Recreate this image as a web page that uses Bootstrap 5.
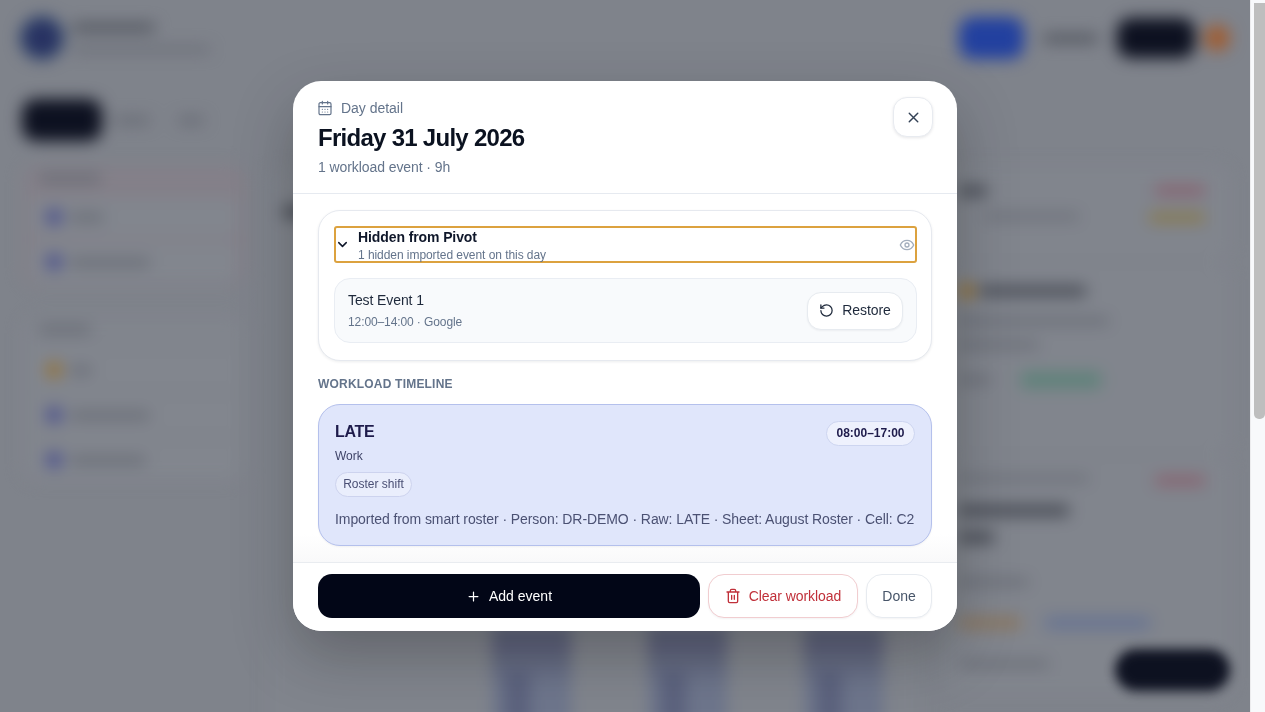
<!doctype html>
<html lang="en">
<head>
<meta charset="utf-8">
<title>Day detail</title>
<link href="https://cdn.jsdelivr.net/npm/bootstrap@5.3.0/dist/css/bootstrap.min.css" rel="stylesheet">
<style>
html,body{height:100%;margin:0;overflow:hidden}
body{font-family:"Liberation Sans",Arial,sans-serif;background:#f8f9fb;color:#0f172a}
.scroller{height:712px;width:1250px;overflow:hidden;background:#cacdd4}
.track-strip{position:fixed;left:1250px;top:0;width:15px;height:712px;background:#f8f9fb;border-left:1px solid #ececee;z-index:7}
.track-thumb{position:absolute;left:3px;right:0;top:3px;height:416px;background:#bebebe;border-radius:0 0 5px 5px}
.blur-page{height:1207px;filter:blur(8px);padding:17px 20px 0 20px}
.logo-dot{width:44px;height:44px;border-radius:50%;background:radial-gradient(circle,#39458f 40%,#3f7fb0);flex:none;margin-right:-11px}
.bar{display:block;border-radius:3px;height:7px;background:#6a6d76}
.bar-lite{background:#9a9da6}
.blue-pill{width:65px;height:42px;border-radius:14px;background:#2f5ef5}
.navy-pill{width:78px;height:40px;border-radius:14px;background:#0c0f22;margin-right:-10px}
.orange-dot{width:26px;height:26px;border-radius:50%;background:#ff8d40}
.tab-pill{width:80px;height:42px;border-radius:14px;background:#0c0f22}
.top-row{height:42px;gap:19px}
.tab-row{margin-top:40px;gap:12px;padding-left:2px}
.work-grid{display:grid;grid-template-columns:225px 655px 1fr;column-gap:20px;margin-top:24px;padding-left:2px}
.side-card{border:1px solid #c6c6ce;border-radius:14px;padding:8px;margin-bottom:31px}
.side-card.rose{background:#d2c8d0;height:120px}
.side-card.plain{background:#cdd0d7;height:165px}
.side-label-a{margin:1px 8px 15px}
.side-label-b{margin:1px 8px 17px}
.side-row{height:40px;border:1px solid #c6c9d0;border-radius:10px;margin-top:5px;padding-left:14px;gap:8px;background:#cfd2d9}
.tone{width:16px;height:16px;border-radius:50%;background:#6a70d8;flex:none}
.tone.amber{background:#eeb040}
.main-panel{background:#cdd0d7;border:1px solid #c4c7ce;border-radius:18px;height:1000px;padding:40px 15px}
.week-strip{margin-top:408px;padding-left:209px;gap:77px}
.week-col{width:79px;height:300px;background:linear-gradient(#9499bc 0,#9499bc 20px,#adb7d5 60px);display:flex;justify-content:flex-start;padding:45px 0 0 13px}
.week-col span{width:25px;height:60px;background:#8f96bd;display:block}
.info-card{background:#cdd0d7;border:1px solid #c4c7ce;border-radius:14px;padding:20px 16px;margin-bottom:0}
.info-one{height:97px}
.info-two{height:193px}
.info-three{height:240px}
.tag-rose{width:50px;height:9px;background:#dc8f9f}
.tag-amber{width:56px;height:9px;background:#dcbc60}
.tag-green{width:80px;height:16px;background:#92cdb6}
.tag-soft{width:62px;height:12px;background:#dcb88c}
.tag-blue{width:105px;height:12px;background:#a0b2e0}
.float-pill{width:115px;height:42px;border-radius:21px;background:#0c0f22;position:fixed;left:1115px;top:649px;filter:blur(6px)}

.scrim{position:fixed;left:0;top:0;width:1250px;height:712px;background:rgba(15,20,30,.4);z-index:5}
.day-dialog{position:fixed;left:293px;top:81px;width:664px;height:550px;background:#fff;border-radius:28px;z-index:6;display:flex;flex-direction:column;overflow:hidden;box-shadow:0 24px 60px rgba(0,0,0,.25)}
.day-head{padding:17px 24px 0 25px;height:113px;border-bottom:1px solid #e6eaf0;flex:none;position:relative}
.eyebrow{font-size:14px;line-height:20px;color:#64748b;gap:8px;letter-spacing:-.02px}
.eyebrow svg{margin-left:-1px}
.day-title{font-size:24px;line-height:30px;font-weight:700;letter-spacing:-.72px;color:#0b1220;margin:5px 0 0}
.day-sub{font-size:14px;line-height:20px;color:#64748b;margin:4px 0 0;letter-spacing:-.08px}
.close-btn{position:absolute;right:24px;top:16px;width:40px;height:40px;border:1px solid #e8ebf0;border-radius:14px;background:#fff;color:#334155;padding:0;box-shadow:0 1px 3px rgba(15,23,42,.1)}
.day-body{flex:1 1 auto;padding:16px 25px 0 25px;background:linear-gradient(#fff 340px,#f9f9fa 368px);overflow:hidden}
.hidden-card{height:151px;border:1px solid #e6e9ef;border-radius:22px;padding:15px;box-shadow:0 1px 3px rgba(15,23,42,.08);background:#fff}
.hidden-toggle{height:37px;width:583px;border:2px solid #dca23f;border-radius:3px;background:#fff;padding:0;text-align:left}
.chev{width:23px;flex:none;line-height:1;display:flex;justify-content:flex-start;margin-left:-1px;margin-top:-1px}
.toggle-title{display:block;font-size:14px;line-height:18px;font-weight:700;color:#0f172a;margin-top:1px;letter-spacing:-.1px}
.toggle-sub{display:block;font-size:12px;line-height:16px;color:#64748b;letter-spacing:-.06px;margin-top:1px}
.hidden-row{height:65px;width:583px;margin-top:15px;border:1px solid #e9edf3;border-radius:16px;background:#f8fafc;padding:0 13px}
.hidden-name{font-size:14px;line-height:20px;color:#1e293b;letter-spacing:-.1px}
.hidden-meta{font-size:12px;line-height:16px;color:#64748b;margin-top:4px;letter-spacing:-.1px}
.hidden-text{padding-bottom:2px}
.restore-btn{height:38px;width:96px;border:1px solid #e7ebf0;border-radius:14px;background:#fff;font-size:14px;color:#1e293b;gap:8px;padding:0;box-shadow:0 1px 2px rgba(15,23,42,.05);letter-spacing:-.08px}
.sect-label{font-size:12px;line-height:16px;font-weight:700;letter-spacing:.2px;color:#64748b;margin:15px 0 12px}
.shift-card{height:142px;border:1px solid #b4c0ec;border-radius:22px;background:#e0e6fb;padding:15px 16px;box-shadow:0 1px 2px rgba(15,23,42,.05)}
.shift-name{font-size:16px;line-height:24px;font-weight:700;color:#1e1b4b;letter-spacing:-.3px}
.shift-kind{font-size:12px;line-height:16px;color:#3f4468;margin-top:2px}
.time-chip{height:25px;width:89px;border:1px solid #cdd5f0;border-radius:13px;background:#eef1fd;font-size:12px;font-weight:700;color:#1e1b4b;line-height:23px;text-align:center;margin-top:1px}
.kind-chip{display:block;width:77px;text-align:center;height:25px;line-height:23px;border:1px solid #cdd3ee;border-radius:13px;background:#eaeefc;font-size:12px;color:#4a4f74;padding:0;margin-top:8px}
.shift-note{font-size:14px;line-height:20px;color:#4b5173;margin-top:12px;white-space:nowrap;letter-spacing:-.08px}
.day-foot{height:69px;flex:none;border-top:1px solid #e9ecf0;padding:11px 25px 0 25px;gap:8px;background:#fff}
.add-btn{flex:1 1 auto;height:44px;border:0;border-radius:14px;background:#020617;color:#fff;font-size:14px;gap:8px}
.add-btn:hover{background:#020617;color:#fff}
.clear-btn{width:150px;height:44px;flex:none;border:1px solid #f1cdd0;border-radius:16px;background:#fff;color:#c0303a;font-size:14px;gap:8px;padding:0;box-shadow:0 1px 2px rgba(15,23,42,.05);letter-spacing:-.06px}
.done-btn{width:66px;height:44px;flex:none;border:1px solid #e7ebf0;border-radius:16px;background:#fff;color:#475569;font-size:14px;padding:0;box-shadow:0 1px 2px rgba(15,23,42,.05)}
</style>
</head>
<body>
<div class="scroller">
  <div class="blur-page" aria-hidden="true">
    <div class="d-flex align-items-center top-row">
      <div class="logo-dot"></div>
      <div class="flex-grow-1">
        <span class="bar" style="width:83px;margin-bottom:16px"></span>
        <span class="bar bar-lite" style="width:138px;height:5px"></span>
      </div>
      <div class="blue-pill"></div>
      <span class="bar" style="width:55px"></span>
      <div class="navy-pill"></div>
      <div class="orange-dot"></div>
    </div>
    <div class="d-flex align-items-center tab-row">
      <div class="tab-pill"></div>
      <span class="bar bar-lite" style="width:36px"></span>
      <span class="bar bar-lite ms-3" style="width:26px"></span>
    </div>
    <div class="work-grid">
      <div>
        <div class="side-card rose">
          <span class="bar bar-lite side-label-a" style="width:62px"></span>
          <div class="side-row d-flex align-items-center"><i class="tone"></i><span class="bar bar-lite" style="width:34px"></span></div>
          <div class="side-row d-flex align-items-center"><i class="tone"></i><span class="bar bar-lite" style="width:80px"></span></div>
        </div>
        <div class="side-card plain">
          <span class="bar bar-lite side-label-b" style="width:52px"></span>
          <div class="side-row d-flex align-items-center"><i class="tone amber"></i><span class="bar bar-lite" style="width:22px"></span></div>
          <div class="side-row d-flex align-items-center"><i class="tone"></i><span class="bar bar-lite" style="width:80px"></span></div>
          <div class="side-row d-flex align-items-center"><i class="tone"></i><span class="bar bar-lite" style="width:76px"></span></div>
        </div>
      </div>
      <div class="main-panel">
        <span class="bar" style="width:90px;height:12px"></span>
        <div class="week-strip d-flex">
          <div class="week-col"><span></span></div>
          <div class="week-col"><span></span></div>
          <div class="week-col"><span></span></div>
        </div>
      </div>
      <div>
        <div class="info-card info-one d-flex justify-content-between">
          <div class="flex-grow-1"><span class="bar" style="width:28px;height:10px;margin-bottom:18px"></span><span class="bar bar-lite" style="width:95px;height:5px;margin-left:25px"></span></div>
          <div class="d-flex flex-column align-items-end me-2" style="gap:18px"><span class="bar tag-rose"></span><span class="bar tag-amber"></span></div>
        </div>
        <div class="info-card info-two">
          <div class="d-flex align-items-center" style="gap:4px;margin-bottom:19px"><i class="tone amber"></i><span class="bar" style="width:107px;height:10px"></span></div>
          <span class="bar bar-lite" style="width:150px;height:6px;margin-bottom:18px"></span>
          <span class="bar bar-lite" style="width:80px;height:6px;margin-bottom:24px"></span>
          <div class="d-flex align-items-center" style="gap:30px"><span class="bar bar-lite" style="width:32px;height:6px"></span><span class="bar tag-green"></span></div>
        </div>
        <div class="info-card info-three">
          <div class="d-flex justify-content-between"><span class="bar bar-lite" style="width:130px;height:5px"></span><span class="bar tag-rose me-2"></span></div>
          <span class="bar" style="width:110px;height:11px;margin-top:20px"></span>
          <span class="bar" style="width:35px;height:11px;margin-top:16px"></span>
          <span class="bar bar-lite" style="width:70px;height:6px;margin-top:36px"></span>
          <div class="d-flex gap-4" style="margin-top:32px"><span class="bar tag-soft"></span><span class="bar tag-blue"></span></div>
          <span class="bar bar-lite" style="width:90px;height:6px;margin-top:32px"></span>
        </div>
      </div>
    </div>
  </div>
</div>
<div class="float-pill" aria-hidden="true"></div>
<div class="scrim"></div>
<div class="track-strip" aria-hidden="true"><div class="track-thumb"></div></div>

<div class="day-dialog" role="dialog" aria-label="Day detail">
  <div class="day-head">
    <div class="eyebrow d-flex align-items-center">
      <svg width="16" height="16" viewBox="0 0 24 24" fill="none" stroke="currentColor" stroke-width="1.8" stroke-linecap="round" stroke-linejoin="round"><path d="M8 2v4M16 2v4"/><rect x="3" y="4" width="18" height="18" rx="2"/><path d="M3 10h18M8 14h.01M12 14h.01M16 14h.01M8 18h.01M12 18h.01M16 18h.01"/></svg>
      <span>Day detail</span>
    </div>
    <h1 class="day-title">Friday 31 July 2026</h1>
    <p class="day-sub">1 workload event · 9h</p>
    <button class="close-btn d-flex align-items-center justify-content-center" type="button" aria-label="Close">
      <svg width="17" height="17" viewBox="0 0 24 24" fill="none" stroke="currentColor" stroke-width="2" stroke-linecap="round" stroke-linejoin="round"><path d="M18 6 6 18M6 6l12 12"/></svg>
    </button>
  </div>
  <div class="day-body">
    <div class="hidden-card">
      <button class="hidden-toggle d-flex align-items-center" type="button">
        <span class="chev"><svg width="15" height="15" viewBox="0 0 24 24" fill="none" stroke="#0f172a" stroke-width="2.4" stroke-linecap="round" stroke-linejoin="round"><path d="m6 9 6 6 6-6"/></svg></span>
        <span class="flex-grow-1"><span class="toggle-title">Hidden from Pivot</span><span class="toggle-sub">1 hidden imported event on this day</span></span>
        <svg width="16" height="16" viewBox="0 0 24 24" fill="none" stroke="#a3aebd" stroke-width="2" stroke-linecap="round" stroke-linejoin="round"><path d="M2 12s3-7 10-7 10 7 10 7-3 7-10 7-10-7-10-7Z"/><circle cx="12" cy="12" r="3"/></svg>
      </button>
      <div class="hidden-row d-flex align-items-center justify-content-between">
        <div class="hidden-text">
          <div class="hidden-name">Test Event 1</div>
          <div class="hidden-meta">12:00–14:00 · Google</div>
        </div>
        <button class="restore-btn d-flex align-items-center justify-content-center" type="button">
          <svg width="15" height="15" viewBox="0 0 24 24" fill="none" stroke="currentColor" stroke-width="2" stroke-linecap="round" stroke-linejoin="round"><path d="M3 12a9 9 0 1 0 9-9 9.75 9.75 0 0 0-6.74 2.74L3 8"/><path d="M3 3v5h5"/></svg>
          <span>Restore</span>
        </button>
      </div>
    </div>
    <div class="sect-label">WORKLOAD TIMELINE</div>
    <div class="shift-card">
      <div class="d-flex justify-content-between align-items-start">
        <div class="shift-name">LATE</div>
        <div class="time-chip">08:00–17:00</div>
      </div>
      <div class="shift-kind">Work</div>
      <span class="kind-chip">Roster shift</span>
      <div class="shift-note">Imported from smart roster · Person: DR-DEMO · Raw: LATE · Sheet: August Roster · Cell: C2</div>
    </div>
  </div>
  <div class="day-foot d-flex">
    <button class="btn add-btn d-flex align-items-center justify-content-center" type="button">
      <svg width="15" height="15" viewBox="0 0 24 24" fill="none" stroke="currentColor" stroke-width="2" stroke-linecap="round" stroke-linejoin="round"><path d="M5 12h14M12 5v14"/></svg>
      <span>Add event</span>
    </button>
    <button class="btn clear-btn d-flex align-items-center justify-content-center" type="button">
      <svg width="16" height="16" viewBox="0 0 24 24" fill="none" stroke="currentColor" stroke-width="2" stroke-linecap="round" stroke-linejoin="round"><path d="M3 6h18M19 6v14c0 1-1 2-2 2H7c-1 0-2-1-2-2V6M8 6V4c0-1 1-2 2-2h4c1 0 2 1 2 2v2M10 11v6M14 11v6"/></svg>
      <span>Clear workload</span>
    </button>
    <button class="btn done-btn" type="button">Done</button>
  </div>
</div>
<script src="https://cdn.jsdelivr.net/npm/bootstrap@5.3.0/dist/js/bootstrap.bundle.min.js"></script>
</body>
</html>
